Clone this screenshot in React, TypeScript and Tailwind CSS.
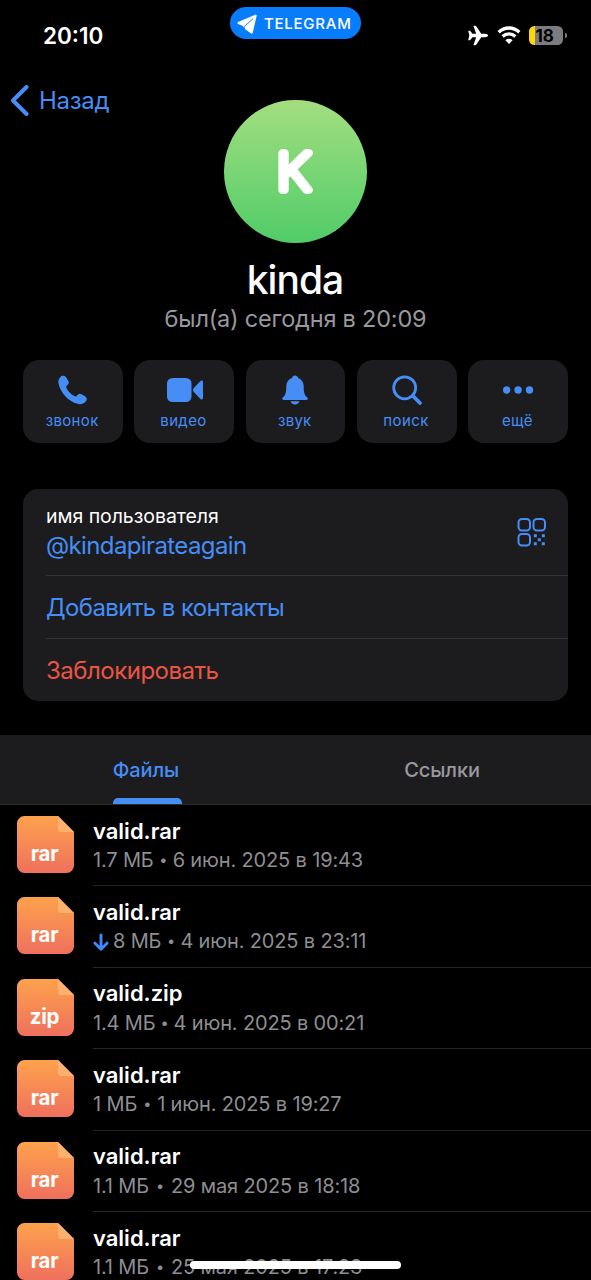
import React from "react";

type IconProps = { className?: string };

const actions: { label: string; tracking: string; icon: React.ReactNode }[] = [
  {
    label: "звонок",
    tracking: "tracking-[0.350px]",
    icon: (
      <svg className="h-8 w-9" viewBox="0 0 36 32" fill="currentColor">
        <path d="M5.200 3.200C6.600 1.500 9.500 1.300 11 3.200L13.300 7c.8 1.300.7 2.500-.3 3.600l-1.400 1.500c-.6.700-.6 1.300-.1 2.100 1.900 3.400 4.600 6.100 7.900 7.900.8.5 1.400.4 2.100-.2l1.500-1.300c1.100-1 2.300-1.100 3.600-.3l3.700 2.300c1.900 1.300 2 3.600.4 5.100-2.400 2.400-5.500 3.100-9 1.900C13.400 26.900 6.700 20 4 11.500 2.800 8 3.200 5.500 5.200 3.200z" />
      </svg>
    ),
  },
  {
    label: "видео",
    tracking: "tracking-[0.350px]",
    icon: (
      <svg className="h-8 w-9 overflow-visible" viewBox="-1 0 36 32" fill="currentColor">
        <rect x="0" y="4" width="24.500" height="24" rx="5.500" />
        <path d="M26.800 14 33.500 7c1.100-1 2.500-.6 2.500.9v16.200c0 1.500-1.400 1.900-2.500.9L26.800 18c-1.100-1.200-1.100-2.800 0-4z" />
      </svg>
    ),
  },
  {
    label: "звук",
    tracking: "tracking-[0.200px]",
    icon: (
      <svg className="h-8 w-9" viewBox="0 0 36 32" fill="currentColor">
        <path d="M18 1.500c1.700 0 2.700 1 3.100 2.600 3.700 1.300 5.600 4.300 5.600 8.200 0 6.200.8 8.900 3.300 11 1.500 1.200 1 2.600-.5 2.600h-23c-1.500 0-2-1.400-.5-2.600 2.500-2.100 3.300-4.800 3.300-11 0-3.900 1.900-6.900 5.600-8.200.4-1.600 1.400-2.600 3.100-2.600z" />
        <path d="M13.500 27.300h9c-.6 2-2.300 3.200-4.500 3.200s-3.900-1.200-4.500-3.200z" />
      </svg>
    ),
  },
  {
    label: "поиск",
    tracking: "tracking-[0.400px]",
    icon: (
      <svg className="h-8 w-9" viewBox="0 0 36 32" fill="none" stroke="currentColor" strokeLinecap="round">
        <circle cx="15.700" cy="13.800" r="11" strokeWidth="2.800" />
        <path d="M24 22 31 29" strokeWidth="3.800" />
      </svg>
    ),
  },
  {
    label: "ещё",
    tracking: "tracking-[0.300px]",
    icon: (
      <svg className="h-8 w-9" viewBox="0 0 36 32" fill="currentColor">
        <circle cx="6.700" cy="16" r="3.700" />
        <circle cx="18.100" cy="16" r="3.700" />
        <circle cx="29.500" cy="16" r="3.700" />
      </svg>
    ),
  },
];

const files = [
  { ext: "rar", size: "1.7 МБ", date: "6 июн. 2025 в 19:43", down: false, dot: "mx-0" },
  { ext: "rar", size: "8 МБ", date: "4 июн. 2025 в 23:11", down: true, dot: "mx-0" },
  { ext: "zip", size: "1.4 МБ", date: "4 июн. 2025 в 00:21", down: false, dot: "mx-[-0.500px]" },
  { ext: "rar", size: "1 МБ", date: "1 июн. 2025 в 19:27", down: false, dot: "mx-[0.500px]" },
  { ext: "rar", size: "1.1 МБ", date: "29 мая 2025 в 18:18", down: false, dot: "mx-[1.500px]" },
  { ext: "rar", size: "1.1 МБ", date: "25 мая 2025 в 17:23", down: false, dot: "mx-[1.500px]" },
];

function Airplane({ className }: IconProps) {
  return (
    <svg className={className} viewBox="0 0 22 22" fill="currentColor">
      <path d="M21.500 11c0 1-1.600 1.800-3.400 1.800h-3.700L9.300 20.400c-.3.500-.7.700-1.200.7H6.800c-.4 0-.6-.3-.4-.7l2.700-7.600H5.200l-2.300 2.900c-.2.300-.5.400-.8.400h-.9c-.3 0-.5-.3-.4-.6L1.900 11 .8 6.500c-.1-.3.100-.6.400-.6h.9c.3 0 .6.100.8.400l2.300 2.900h3.900L6.400 1.600c-.2-.4 0-.7.400-.7h1.300c.5 0 .9.200 1.200.7l5.100 7.600h3.700c1.800 0 3.400.8 3.400 1.800z" />
    </svg>
  );
}

function Wifi({ className }: IconProps) {
  return (
    <svg className={className} viewBox="0 0 24 20" fill="none" stroke="currentColor" strokeWidth="3.300">
      <path d="M1.700 7.200a14.700 14.700 0 0 1 20.600 0" />
      <path d="M5.700 11.500a9 9 0 0 1 12.600 0" />
      <path d="M12 19 8.400 15.300a5.200 5.200 0 0 1 7.200 0z" fill="currentColor" stroke="none" />
    </svg>
  );
}

function StatusBar() {
  return (
    <header className="flex h-[72px] w-full shrink-0 items-start">
      <div className="w-[230px] pt-[21px] pl-[43px] text-[22.500px] leading-[30px] font-semibold">20:10</div>
      <div className="mt-[7px] flex h-[32px] w-[131px] shrink-0 items-center rounded-full bg-[#087dfc] pl-[7px]">
        <svg className="mt-[7px] mb-[4px] h-[21px] w-[21px] shrink-0" viewBox="0 0 21 21">
          <path d="M18.700 1.600 1.500 9 6.500 11.200 8.500 14.200 14.700 18.700z" fill="white" stroke="white" strokeWidth="2" strokeLinejoin="round" />
          <path d="M16.300 4.500 7.300 12.500 7.300 16" fill="none" stroke="#087dfc" strokeWidth="0.900" />
        </svg>
        <span className="ml-[6px] text-[15px] leading-none font-medium tracking-[0.750px] whitespace-nowrap">TELEGRAM</span>
      </div>
      <div className="flex shrink-0 pt-[25px] pl-[106px]">
        <Airplane className="h-[21px] w-[22px] shrink-0" />
        <Wifi className="ml-[8px] h-[20px] w-[24px] shrink-0" />
        <div className="mt-[1px] ml-[8px] flex h-[19px] w-[34px] shrink-0 rounded-[5.500px] bg-[linear-gradient(to_right,#fdd60a_6px,#7c7c80_6px)] pl-[6.500px] text-[17px] leading-[20px] font-bold text-black">
          18
        </div>
        <div className="mt-[8px] ml-[1.500px] h-[5px] w-[2px] shrink-0 rounded-r bg-[#7c7c80]" />
      </div>
    </header>
  );
}

function FileIcon({ ext }: { ext: string }) {
  return (
    <div className="relative mt-[11px] ml-[17px] flex h-[57px] w-[57px] shrink-0 justify-center">
      <svg className="absolute inset-0 h-[57px] w-[57px]" viewBox="0 0 57 57">
        <defs>
          <linearGradient id="fileFill" x1="0" y1="0" x2="0" y2="1">
            <stop offset="0" stopColor="#fda24c" />
            <stop offset="1" stopColor="#ef705d" />
          </linearGradient>
        </defs>
        <path d="M7.500 0H41L57 16v33.500a7.500 7.500 0 0 1-7.500 7.500h-42A7.500 7.500 0 0 1 0 49.500v-42A7.500 7.500 0 0 1 7.500 0z" fill="url(#fileFill)" />
        <path d="M41 0 57 16H44a3 3 0 0 1-3-3z" fill="#feb06f" />
      </svg>
      <span className="relative mt-[25px] mr-[2px] text-[20.500px] leading-[26px] font-bold tracking-[-0.3px]">{ext}</span>
    </div>
  );
}

export default function App() {
  return (
    <div className="relative flex h-[1280px] w-[591px] flex-col overflow-hidden bg-black font-['Inter','Noto_Sans',sans-serif] text-white">
      <StatusBar />
      <div className="flex h-[171px] shrink-0 items-start">
        <div className="flex w-[224px] pt-[13px] pl-[10px] text-[#468df6]">
          <svg className="h-[31px] w-[20px]" viewBox="0 0 20 31" fill="none" stroke="currentColor" strokeWidth="4" strokeLinecap="round" strokeLinejoin="round">
            <path d="M16.500 2 3 15.500 16.500 29" />
          </svg>
          <span className="mt-px ml-[9px] text-[24px] leading-[30px] tracking-[-0.3px]">Назад</span>
        </div>
        <div className="mt-[28px] h-[143px] w-[143px] rounded-full bg-[linear-gradient(#a3de80,#50cc68)]">
          <svg className="h-full w-full" viewBox="0 0 143 143">
            <text transform="translate(69.500 90.200) scale(1.13 1)" textAnchor="middle" className="fill-white stroke-white font-['Inter',sans-serif] text-[50px] font-thin" strokeWidth="8" strokeLinejoin="round">K</text>
          </svg>
        </div>
      </div>
      <h1 className="mt-[13px] shrink-0 pr-px text-center text-[39px] leading-[48px] font-medium tracking-[-1px]">kinda</h1>
      <p className="mt-px shrink-0 text-center text-[23.500px] leading-[28px] tracking-[-0.2px] text-[#98989e]">был(а) сегодня в 20:09</p>

      <div className="mx-[23px] mt-[27px] grid h-[83px] shrink-0 grid-cols-5 gap-[11.500px] text-[#468df6]">
        {actions.map((a) => (
          <div key={a.label} className="flex flex-col items-center rounded-[16px] bg-[#1c1c1e] pt-[14px]">
            {a.icon}
            <span className={`mt-[4.500px] mr-[1.500px] text-[15px] leading-[20px] ${a.tracking}`}>{a.label}</span>
          </div>
        ))}
      </div>

      <section className="mx-[23px] mt-[46px] flex h-[212px] shrink-0 flex-col rounded-[15px] bg-[#1c1c1e] pl-[23px] text-[24px] leading-[30px]">
        <div className="flex h-[87px] items-center justify-between border-b border-[#353538] pr-[22px]">
          <div>
            <div className="text-[19.500px] leading-[26px] tracking-[-0.050px]">имя пользователя</div>
            <div className="mt-[2px] tracking-[-0.620px] text-[#468df6]">@kindapirateagain</div>
          </div>
          <svg className="h-[29px] w-[29px] text-[#468df6]" viewBox="0 0 29 29" fill="none" stroke="currentColor" strokeWidth="2">
            <rect x="1.500" y="1" width="11.500" height="11.500" rx="3.500" />
            <rect x="16.500" y="1" width="11.500" height="11.500" rx="3.500" />
            <rect x="1.500" y="16" width="11.500" height="11.500" rx="3.500" />
            <path d="M16.800 17.800h3M24.800 17.800h3M20.800 21.800h3M16.800 25.800h3M24.800 25.800h3" strokeWidth="3" />
          </svg>
        </div>
        <div className="flex h-[63px] items-center border-b border-[#353538] pt-[2px] tracking-[-0.600px] text-[#468df6]">Добавить в контакты</div>
        <div className="flex h-[62px] items-center pt-[2px] tracking-[-0.500px] text-[#eb5545]">Заблокировать</div>
      </section>

      <nav className="mt-[34px] flex h-[70px] shrink-0 border-b border-[#2c2c2e] bg-[#1c1c1e] text-[20px] leading-[70px] font-medium tracking-[-0.1px]">
        <div className="flex w-[294px] justify-center">
          <div className="flex h-full w-[69px] flex-col items-center justify-between text-[#468df6]">
            <span className="mr-[2px] h-[62px]">Файлы</span>
            <div className="h-[6px] w-full rounded-t-[5px] bg-[#468df6]" />
          </div>
        </div>
        <div className="w-[296px] text-center text-[#98989e]">Ссылки</div>
      </nav>

      <ul className="shrink-0">
        {files.map((f, i) => (
          <li key={i} className="flex h-[81.400px]">
            <FileIcon ext={f.ext} />
            <div className="ml-[19px] flex h-full flex-1 flex-col border-b border-[#242426] pt-[11.600px]">
              <div className="text-[22px] leading-[28px] font-semibold">valid.{f.ext}</div>
              <div className="mt-[1.500px] flex items-center text-[20px] leading-[28px] tracking-[-0.150px] text-[#8e8e93]">
                {f.down && (
                  <svg className="mt-[2px] mr-[4px] h-[18px] w-[16px] text-[#3e88f7]" viewBox="0 0 16 18" fill="none" stroke="currentColor" strokeWidth="3" strokeLinecap="round" strokeLinejoin="round">
                    <path d="M8 2v14M2 10.200l6 6 6-6" />
                  </svg>
                )}
                <span className="flex items-center whitespace-pre">
                  <span>{f.size} </span>
                  <span className={`text-[14.500px] ${f.dot}`}>•</span>
                  <span> {f.date}</span>
                </span>
              </div>
            </div>
          </li>
        ))}
      </ul>
      <div className="absolute top-[1261px] left-[190px] h-[8px] w-[211px] rounded-full bg-white" />
    </div>
  );
}
